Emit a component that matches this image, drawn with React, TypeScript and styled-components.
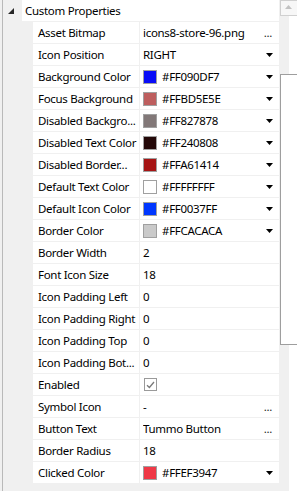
import React from "react";
import styled, { createGlobalStyle } from "styled-components";

const Global = createGlobalStyle`
  html, body { margin: 0; padding: 0; background: #ffffff; overflow: hidden; }
  body { width: 297px; height: 491px; }
  #root { width: 297px; height: 491px; }
`;

const Page = styled.div`
  display: flex;
  width: 297px;
  height: 491px;
  overflow: hidden;
  font-family: "Noto Sans", "Open Sans", sans-serif;
  font-size: 11.5px;
  letter-spacing: -0.3px;
  color: #000000;
`;

const Grid = styled.div`
  width: 276px;
  margin-left: 2px;
  border-left: 1px solid #b9b9b9;
  background: #f0f0f0;
  display: flex;
  flex-direction: column;
  flex: none;
  box-shadow: -2px 0 0 #f0f0f0;
`;

const CategoryRow = styled.div<{ $tone: "light" | "gray" }>`
  display: flex;
  align-items: center;
  height: 21px;
  border-bottom: 1px solid #f0f0f0;
  flex: none;
  background: ${(p) => (p.$tone === "light" ? "#ffffff" : "#f0f0f0")};
`;

const CategoryGutter = styled.div`
  width: 19px;
  height: 100%;
  background: #f0f0f0;
  display: flex;
  align-items: center;
  padding-left: 5px;
  box-sizing: border-box;
  flex: none;
`;

const CategoryText = styled.div`
  padding-left: 3px;
  line-height: 21px;
  white-space: nowrap;
`;

const Row = styled.div`
  display: flex;
  height: 21px;
  border-bottom: 1px solid #f0f0f0;
  flex: none;
`;

const Gutter = styled.div`
  width: 30px;
  flex: none;
  background: #f0f0f0;
`;

const Label = styled.div`
  width: 107px;
  flex: none;
  box-sizing: border-box;
  padding-left: 5px;
  background: #ffffff;
  border-right: 1px solid #f0f0f0;
  line-height: 21px;
  white-space: nowrap;
  overflow: hidden;
`;

const Value = styled.div`
  flex: 1;
  display: flex;
  align-items: center;
  gap: 5px;
  padding: 0 6px 0 3px;
  background: #ffffff;
  min-width: 0;
`;

const ValueText = styled.span`
  flex: 1;
  line-height: 21px;
  white-space: nowrap;
  overflow: hidden;
`;

const Swatch = styled.span<{ $c: string }>`
  width: 14px;
  height: 14px;
  box-sizing: border-box;
  border: 1px solid #a0a0a0;
  background: ${(p) => p.$c};
  flex: none;
`;

const Check = styled.span`
  width: 13px;
  height: 13px;
  box-sizing: border-box;
  border: 1px solid #9a9a9a;
  background: #ffffff;
  display: flex;
  align-items: center;
  justify-content: center;
  flex: none;
  margin-left: 1px;
`;

const Dots = styled.span`
  flex: none;
  line-height: 21px;
  color: #1e1e1e;
  letter-spacing: -0.3px;
  margin-right: 1px;
`;

const Scroll = styled.div`
  width: 18px;
  flex: none;
  display: flex;
  flex-direction: column;
  background: linear-gradient(to right, #f0f0f0 0, #f0f0f0 10px, #ffffff 10px);
`;

const ScrollButton = styled.div`
  height: 16px;
  margin-left: 1px;
  box-sizing: border-box;
  border: 1px solid #d0d0d0;
  border-right: none;
  background: #f7f7f7;
  display: flex;
  padding: 4px 0 0 4px;
  flex: none;
`;

const ScrollGap = styled.div<{ $h: number }>`
  height: ${(p) => p.$h}px;
  flex: none;
`;

const Thumb = styled.div`
  height: 271px;
  margin-left: 1px;
  box-sizing: border-box;
  border: 1px solid #9e9e9e;
  border-right: none;
  background: #ffffff;
  flex: none;
`;

const Arrow = () => (
  <svg width="7" height="4" viewBox="0 0 7 4" style={{ flex: "none" }}>
    <polygon points="0,0 7,0 3.5,4" fill="#000" />
  </svg>
);

const Expanded = () => (
  <svg width="6" height="6" viewBox="0 0 6 6">
    <polygon points="6,0 6,6 0,6" fill="#262626" />
  </svg>
);

type RowData = {
  label: string;
  value?: string;
  color?: string;
  kind?: "drop" | "dots" | "check";
};

const rows: RowData[] = [
  { label: "Asset Bitmap", value: "icons8-store-96.png", kind: "dots" },
  { label: "Icon Position", value: "RIGHT", kind: "drop" },
  { label: "Background Color", color: "#090DF7", value: "#FF090DF7", kind: "drop" },
  { label: "Focus Background", color: "#BD5E5E", value: "#FFBD5E5E", kind: "drop" },
  { label: "Disabled Backgro...", color: "#827878", value: "#FF827878", kind: "drop" },
  { label: "Disabled Text Color", color: "#240808", value: "#FF240808", kind: "drop" },
  { label: "Disabled Border...", color: "#A61414", value: "#FFA61414", kind: "drop" },
  { label: "Default Text Color", color: "#FFFFFF", value: "#FFFFFFFF", kind: "drop" },
  { label: "Default Icon Color", color: "#0037FF", value: "#FF0037FF", kind: "drop" },
  { label: "Border Color", color: "#CACACA", value: "#FFCACACA", kind: "drop" },
  { label: "Border Width", value: "2" },
  { label: "Font Icon Size", value: "18" },
  { label: "Icon Padding Left", value: "0" },
  { label: "Icon Padding Right", value: "0" },
  { label: "Icon Padding Top", value: "0" },
  { label: "Icon Padding Bot...", value: "0" },
  { label: "Enabled", kind: "check" },
  { label: "Symbol Icon", value: "-", kind: "dots" },
  { label: "Button Text", value: "Tummo Button", kind: "dots" },
  { label: "Border Radius", value: "18" },
  { label: "Clicked Color", color: "#EF3947", value: "#FFEF3947", kind: "drop" },
];

export default function App() {
  return (
    <>
      <Global />
      <Page>
        <Grid>
          <CategoryRow $tone="light">
            <CategoryGutter>
              <Expanded />
            </CategoryGutter>
            <CategoryText>Custom Properties</CategoryText>
          </CategoryRow>
          {rows.map((r) => (
            <Row key={r.label}>
              <Gutter />
              <Label>{r.label}</Label>
              <Value>
                {r.color && <Swatch $c={r.color} />}
                {r.kind === "check" ? (
                  <>
                    <Check>
                      <svg width="9" height="8" viewBox="0 0 9 8">
                        <polyline
                          points="1,4.2 3.4,6.5 8,1"
                          fill="none"
                          stroke="#7a7a7a"
                          strokeWidth="1.3"
                        />
                      </svg>
                    </Check>
                    <ValueText />
                  </>
                ) : (
                  <ValueText>{r.value}</ValueText>
                )}
                {r.kind === "drop" && <Arrow />}
                {r.kind === "dots" && <Dots>...</Dots>}
              </Value>
            </Row>
          ))}
          <CategoryRow $tone="gray">
            <CategoryGutter>
              <Expanded />
            </CategoryGutter>
            <CategoryText>Common Properties</CategoryText>
          </CategoryRow>
        </Grid>
        <Scroll>
          <ScrollButton>
            <svg width="7" height="4" viewBox="0 0 7 4">
              <polygon points="0,4 7,4 3.5,0" fill="#c2c2c2" />
            </svg>
          </ScrollButton>
          <ScrollGap $h={58} />
          <Thumb />
        </Scroll>
      </Page>
    </>
  );
}
